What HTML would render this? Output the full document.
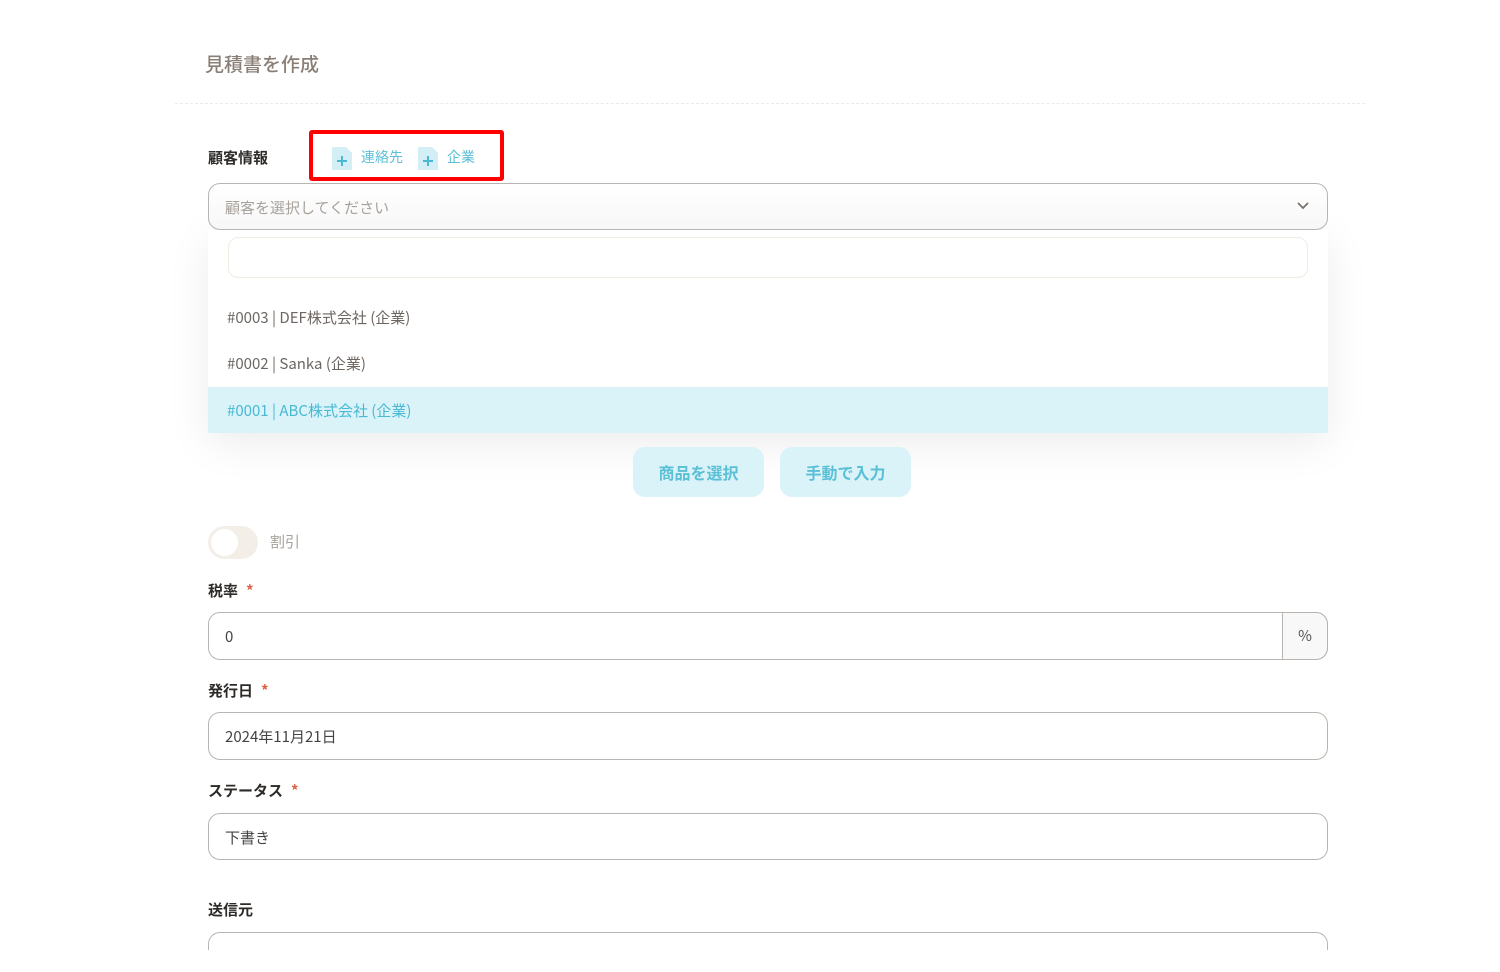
<!DOCTYPE html>
<html><head><meta charset="utf-8"><style>
*{box-sizing:border-box;margin:0;padding:0}
html,body{width:1500px;height:972px;overflow:hidden}
body{background:#fff;font-family:"Noto Sans CJK JP","Liberation Sans",sans-serif;position:relative;color:#333}
.a{position:absolute}
.title{left:205px;top:50px;font-size:19px;color:#8a7f76;font-weight:500}
.hr{left:175px;top:103px;width:1190px;border-top:1px dashed #eee9e2}
.lbl{font-size:15px;font-weight:bold;color:#2e2a27}
.star{color:#e0614a;margin-left:8px}
.inp{left:208px;width:1120px;height:48px;border:1.5px solid #b9b4af;border-radius:12px;font-size:15px;color:#444;padding-left:16px;line-height:47px}
.btn{top:447px;width:131px;height:50px;background:#d9f3f9;border-radius:12px;color:#5bbfd6;font-size:16px;font-weight:bold;text-align:center;line-height:50px}
.item{left:208px;width:1120px;height:46px;font-size:15px;color:#6d6661;padding-left:19px;line-height:48px}
</style></head><body>
<div class="a title">見積書を作成</div>
<div class="a hr"></div>
<div class="a lbl" style="left:208px;top:147px">顧客情報</div>
<div class="a" style="left:309px;top:130px;width:195px;height:51px;border:4px solid #f00;border-radius:3px"></div>
<svg class="a" style="left:332px;top:147px" width="20" height="23"><path d="M0 0H14L20 6V23H0Z" fill="#d3eff5"/><path d="M10 9v10M5 14h10" stroke="#4ab8d3" stroke-width="2"/></svg>
<div class="a" style="left:361px;top:147px;font-size:14px;color:#5bbfd6">連絡先</div>
<svg class="a" style="left:418px;top:147px" width="20" height="23"><path d="M0 0H14L20 6V23H0Z" fill="#d3eff5"/><path d="M10 9v10M5 14h10" stroke="#4ab8d3" stroke-width="2"/></svg>
<div class="a" style="left:447px;top:147px;font-size:14px;color:#5bbfd6">企業</div>
<div class="a" style="left:208px;top:230px;width:1120px;height:203px;background:#fff;box-shadow:0 10px 40px rgba(0,0,0,0.08)"></div>
<div class="a inp" style="top:183px;height:47px;color:#a8a29c;background:linear-gradient(#fff,#f7f7f7)">顧客を選択してください</div>
<svg class="a" style="left:1296px;top:201px" width="14" height="10"><path d="M2 2l5 5 5-5" stroke="#7a726c" stroke-width="1.8" fill="none"/></svg>
<div class="a" style="left:228px;top:237px;width:1080px;height:41px;border:1px solid #f0ece2;border-radius:10px"></div>
<div class="a item" style="top:294px">#0003 | DEF株式会社 (企業)</div>
<div class="a item" style="top:340px">#0002 | Sanka (企業)</div>
<div class="a item" style="top:387px;background:#d9f3f9;color:#4ab8d3">#0001 | ABC株式会社 (企業)</div>
<div class="a btn" style="left:633px">商品を選択</div>
<div class="a btn" style="left:780px">手動で入力</div>
<div class="a" style="left:208px;top:526px;width:50px;height:33px;border-radius:17px;background:#f3efe8"></div>
<div class="a" style="left:211px;top:529px;width:27px;height:27px;border-radius:50%;background:#fff"></div>
<div class="a" style="left:270px;top:531px;font-size:15px;color:#a8a29c">割引</div>
<div class="a lbl" style="left:208px;top:580px">税率<span class="star">*</span></div>
<div class="a inp" style="top:612px">0</div>
<div class="a" style="left:1282px;top:612px;width:46px;height:48px;border:1.5px solid #b9b4af;background:#f8f8f8;border-radius:0 12px 12px 0;text-align:center;line-height:46px;font-size:15px;color:#555">%</div>
<div class="a lbl" style="left:208px;top:680px">発行日<span class="star">*</span></div>
<div class="a inp" style="top:712px">2024年11月21日</div>
<div class="a lbl" style="left:208px;top:780px">ステータス<span class="star">*</span></div>
<div class="a inp" style="top:813px;height:47px">下書き</div>
<div class="a lbl" style="left:208px;top:899px">送信元</div>
<div class="a" style="left:208px;top:932px;width:1120px;height:18px;border:1.5px solid #b9b4af;border-bottom:none;border-radius:12px 12px 0 0"></div>
</body></html>
